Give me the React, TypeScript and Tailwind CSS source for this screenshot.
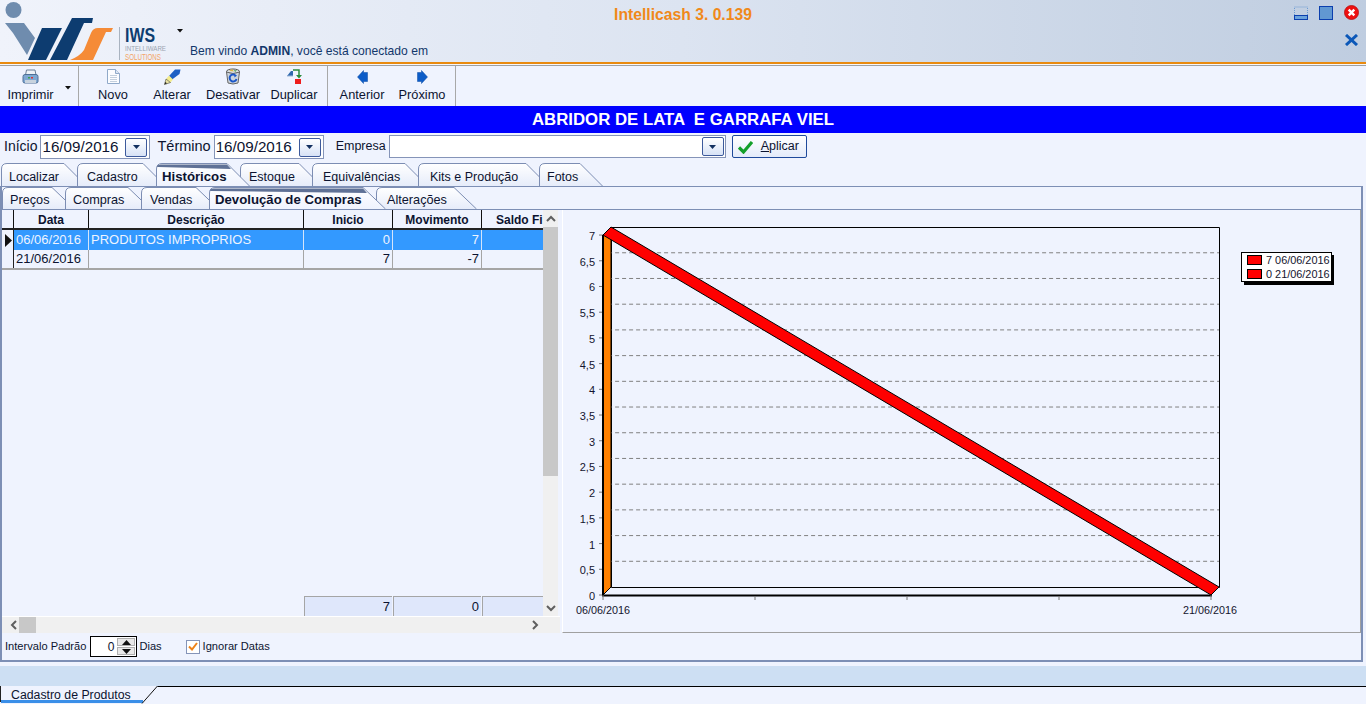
import React from "react";

const TEXT = "text-[#0c1330]";

function TabShape({ w, h, active }: { w: number; h: number; active?: boolean }) {
  const id = `g${w}${h}${active ? "a" : "n"}`;
  const d = `M0.5 ${h} L0.5 6 Q0.5 0.5 6 0.5 L${w - 23} 0.5 L${w - 0.5} ${h}`;
  return (
    <svg className="absolute left-0 top-0 pointer-events-none" width={w} height={h + 1}>
      <defs>
        <linearGradient id={id} x1="0" y1="0" x2="0" y2="1">
          <stop offset="0" stopColor="#ffffff" />
          <stop offset="1" stopColor={active ? "#eff3fe" : "#e6ecfa"} />
        </linearGradient>
      </defs>
      <path d={d} fill={`url(#${id})`} stroke="#7c8db3" />
      {active && <path d={`M1 4 Q1 1.5 5 1.5 L${w - 23} 1.5 L${w - 19} 6 L2 4 Z`} fill="#5f7196" />}
    </svg>
  );
}

function Tab({ slot, pad, w, h, active, children }: { slot: string; pad: string; w: number; h: number; active?: boolean; children: React.ReactNode }) {
  return (
    <div className={`relative shrink-0 ${slot} ${active ? "z-10" : ""}`}>
      <TabShape w={w} h={h} active={active} />
      <div className={`relative flex h-full items-end whitespace-nowrap leading-[17px] ${pad} ${active ? "pb-[1px] text-[13.2px] font-bold" : ""}`}>{children}</div>
    </div>
  );
}

function Logo() {
  return (
    <svg width="176" height="62" viewBox="0 0 176 62" className="shrink-0">
      <circle cx="13.5" cy="10" r="8" fill="#6f8cae" />
      <path d="M5 23 H24 L35 38 L27 55 L13 33 Z" fill="#6f8cae" />
      <path d="M28 60 L42 28 H62 L46 60 Z" fill="#0d3c70" />
      <path d="M50 60 L72 18 H93 L92 23 H84 L67 60 Z" fill="#0d3c70" />
      <path d="M70 60 Q80 56 84 50 L91 33 Q93 28 98 28 H113 L111 32 H106 L93 60 Z" fill="#f58b37" />
      <rect x="119" y="27" width="1" height="33" fill="#a9b3c0" />
      <text x="125" y="42" fontFamily="'Liberation Sans',sans-serif" fontWeight="700" fontSize="20" fill="#0d3c70" textLength="30" lengthAdjust="spacingAndGlyphs">IWS</text>
      <text x="125" y="51" fontFamily="'Liberation Sans',sans-serif" fontSize="7.5" fill="#9aa4b0" textLength="41" lengthAdjust="spacingAndGlyphs">INTELLIWARE</text>
      <text x="125" y="60" fontFamily="'Liberation Sans',sans-serif" fontSize="8.5" fill="#f3a468" textLength="36" lengthAdjust="spacingAndGlyphs">SOLUTIONS</text>
    </svg>
  );
}

function Caret({ className = "" }: { className?: string }) {
  return (
    <svg width="6" height="4" viewBox="0 0 6 4" className={className}>
      <path d="M0 0 H6 L3 3.5 Z" fill="#101010" />
    </svg>
  );
}

function PrinterIcon() {
  return (
    <svg width="17" height="16" viewBox="0 0 17 16">
      <path d="M4.5 1 H13 L14 6 H3.5 Z" fill="#eef2f8" stroke="#6b7f98" />
      <path d="M1 7.5 Q1 5.5 3 5.5 H14 Q16 5.5 16 7.5 V12.5 Q16 14 14 14 H3 Q1 14 1 12.5 Z" fill="#7ea7d2" stroke="#4e6f96" />
      <rect x="3" y="11" width="11" height="3" fill="#c8d3de" />
      <rect x="6" y="8" width="2" height="1.5" fill="#3ca24a" />
      <rect x="9" y="8" width="2" height="1.5" fill="#d33" />
    </svg>
  );
}
function DocIcon() {
  return (
    <svg width="13" height="15" viewBox="0 0 13 15">
      <path d="M0.5 0.5 H8.5 L12.5 4.5 V14.5 H0.5 Z" fill="#fbfcff" stroke="#90a9c9" />
      <path d="M8.5 0.5 V4.5 H12.5" fill="#dbe6f3" stroke="#90a9c9" />
      <path d="M3 6.5 H10 M3 8.5 H10 M3 10.5 H10 M3 12.5 H10" stroke="#c3cfdd" />
    </svg>
  );
}
function PencilIcon() {
  return (
    <svg width="17" height="16" viewBox="0 0 17 16">
      <path d="M11 0.5 L16.5 0.5 L15.5 5 L8 10.5 L5 7 Z" fill="#1d5fc4" />
      <path d="M2 10 L6.5 13.5 L9 10.5 L5 6.5 Z" fill="#f4ec8f" />
      <path d="M0.5 15.5 L2 10 L6.5 13.5 Z" fill="#e9e2a3" stroke="#4a4a3a" strokeWidth="0.6" />
      <path d="M0.5 15.5 L1.2 13 L3 14.3 Z" fill="#222" />
    </svg>
  );
}
function BinIcon() {
  return (
    <svg width="16" height="17" viewBox="0 0 16 17">
      <ellipse cx="8" cy="3.5" rx="6.5" ry="2.5" fill="#dfe4ea" stroke="#555" />
      <path d="M1.5 4 L3 15 Q8 17 13 15 L14.5 4 Q8 7 1.5 4 Z" fill="#ccd4de" stroke="#666" />
      <path d="M4 3 L7 1 L9 3.5 Z" fill="#d9b34a" />
      <path d="M9 2 L12 2.5 L10 4 Z" fill="#4f9c4d" />
      <path d="M10 7 A3.5 3.5 0 1 0 11.5 11" fill="none" stroke="#1b57c9" strokeWidth="2" />
      <path d="M9 5.8 L12 7.5 L9.5 9.5 Z" fill="#1b57c9" />
    </svg>
  );
}
function DuplicateIcon() {
  return (
    <svg width="15" height="15" viewBox="0 0 15 15">
      <path d="M0 7 L4 2 H6 V7 Z" fill="#2f68ad" />
      <path d="M6 1 H12 V7" fill="none" stroke="#2a8b3d" strokeWidth="1.5" />
      <path d="M9 6 H15 L12 9.5 Z" fill="#2a8b3d" />
      <path d="M0 7 H6" stroke="#9db7d8" />
      <rect x="8" y="10" width="6" height="5" fill="#ee1c1c" />
    </svg>
  );
}
function ArrowIcon({ right }: { right?: boolean }) {
  return (
    <svg width="11" height="14" viewBox="0 0 11 14">
      <path d={right ? "M0.5 2.5 H4.5 V0.5 L10.5 7 L4.5 13.5 V11.5 H0.5 Z" : "M10.5 2.5 H6.5 V0.5 L0.5 7 L6.5 13.5 V11.5 H10.5 Z"} fill="#0c5cc8" stroke="#0a4aa5" strokeWidth="0.5" />
    </svg>
  );
}

function ToolBtn({ w, icon, label }: { w: string; icon: React.ReactNode; label: string }) {
  return (
    <div className={`flex shrink-0 flex-col items-center ${w}`}>
      <div className="flex h-[19px] items-center justify-center pt-[2px]">{icon}</div>
      <div className="mt-[3px] text-[12.8px] leading-[14px]">{label}</div>
    </div>
  );
}

function DropBtn() {
  return (
    <div className="flex h-[19px] w-[22px] shrink-0 items-center justify-center rounded-[2px] border border-[#3d5a9c] bg-gradient-to-b from-white to-[#d7e2f6]">
      <svg width="7" height="4" viewBox="0 0 7 4"><path d="M0 0 H7 L3.5 4 Z" fill="#12305f" /></svg>
    </div>
  );
}

function DateBox({ v }: { v: string }) {
  return (
    <div className="flex h-[24px] w-[110px] shrink-0 items-center justify-between border border-[#8594b8] bg-white pl-[1px] pr-[2px] text-[15.2px]">
      <span className="pt-[1px]">{v}</span>
      <DropBtn />
    </div>
  );
}

function Chevron({ dir }: { dir: "up" | "down" | "left" | "right" }) {
  const paths = {
    up: "M1 6 L5 2 L9 6",
    down: "M1 2 L5 6 L9 2",
    left: "M6 1 L2 5 L6 9",
    right: "M2 1 L6 5 L2 9",
  };
  const vertical = dir === "up" || dir === "down";
  return (
    <svg width={vertical ? 10 : 8} height={vertical ? 8 : 10} viewBox={vertical ? "0 0 10 8" : "0 0 8 10"}>
      <path d={paths[dir]} fill="none" stroke="#5f5f5f" strokeWidth="2" />
    </svg>
  );
}

const COLS = "grid grid-cols-[12px_75px_215px_89px_89px_61px]";

function Grid() {
  const head = "flex items-center justify-center border-r border-[#111] pt-[1px] font-bold overflow-hidden whitespace-nowrap";
  const cell = "flex items-center border-r border-[#a5a5a5] px-[2px] overflow-hidden whitespace-nowrap";
  return (
    <div className="flex min-h-0 flex-1 flex-col text-[12px]">
      <div className={`${COLS} h-[20px] shrink-0 border-b-2 border-[#222] text-[12px]`}>
        <div className="border-r border-[#111]" />
        <div className={head}>Data</div>
        <div className={head}>Descrição</div>
        <div className={head}>Inicio</div>
        <div className={head}>Movimento</div>
        <div className="flex items-center overflow-hidden whitespace-nowrap pl-[14px] pt-[1px] font-bold">Saldo Final</div>
      </div>
      <div className={`${COLS} h-[20px] shrink-0 text-[13px] text-[#eef4ff]`}>
        <div className="flex items-center border-r border-[#222] bg-[#eff3fe] pl-[3px]">
          <svg width="7" height="13" viewBox="0 0 7 13"><path d="M0 0 L7 6.5 L0 13 Z" fill="#111" /></svg>
        </div>
        <div className={`${cell} border-[#d5e5fb] bg-[#3399ff]`}>06/06/2016</div>
        <div className={`${cell} border-[#d5e5fb] bg-[#3399ff]`}>PRODUTOS IMPROPRIOS</div>
        <div className={`${cell} justify-end border-[#d5e5fb] bg-[#3399ff]`}>0</div>
        <div className={`${cell} justify-end border-[#d5e5fb] bg-[#3399ff]`}>7</div>
        <div className="bg-[#3399ff]" />
      </div>
      <div className={`${COLS} h-[20px] shrink-0 border-b-2 border-[#a5a5a5] text-[13px]`}>
        <div className="border-r border-[#222]" />
        <div className={cell}>21/06/2016</div>
        <div className={cell} />
        <div className={`${cell} justify-end`}>7</div>
        <div className={`${cell} justify-end`}>-7</div>
        <div />
      </div>
      <div className="flex-1" />
      <div className={`${COLS} mb-[2px] h-[18px] shrink-0 text-[13px]`}>
        <div className="col-span-3" />
        <div className="mr-[1px] flex items-center justify-end border-l border-t border-[#a5a5a5] bg-[#dfe7fb] pr-[2px]">7</div>
        <div className="mr-[1px] flex items-center justify-end border-l border-t border-[#a5a5a5] bg-[#dfe7fb] pr-[2px]">0</div>
        <div className="border-l border-t border-[#a5a5a5] bg-[#dfe7fb]" />
      </div>
    </div>
  );
}

function Chart() {
  const labels = ["0", "0,5", "1", "1,5", "2", "2,5", "3", "3,5", "4", "4,5", "5", "5,5", "6", "6,5", "7"];
  const ticksX = [755, 907, 1059];
  const f = "'Liberation Sans',sans-serif";
  return (
    <svg viewBox="563 210 797 422" width="797" height="422" className="block">
      <path d="M611.5 587.5 V227.5 H1219.5 V587.5 H611.5" fill="none" stroke="#000" />
      {labels.map((l, i) => {
        const yFront = 595 - i * 25.71;
        const yBack = yFront - 8;
        return (
          <g key={l}>
            <path d={`M599 ${yFront} H603`} stroke="#777" />
            {i > 0 && i < 14 && <path d={`M604 ${yBack + 7} L611 ${yBack} H1219`} fill="none" stroke="#808080" strokeDasharray="4 3" />}
            <text x="595" y={yFront + 5} textAnchor="end" fontFamily={f} fontSize="11" fill="#14142e">{l}</text>
          </g>
        );
      })}
      <path d="M603 235 L611 227 V587 L603 595 Z" fill="#ff8000" stroke="#000" />
      <path d="M603 595 V235" stroke="#000" strokeWidth="2" />
      <path d="M602 595.5 H1212" stroke="#000" strokeWidth="2" />
      <path d="M603 595 V600 M1211 595 V600" stroke="#777" />
      {ticksX.map((x) => (
        <path key={x} d={`M${x} 596 V600`} stroke="#777" />
      ))}
      <path d="M603 235 L611 227 L1219 587 L1211 595 Z" fill="#ff0000" stroke="#000" />
      <text x="603" y="614" textAnchor="middle" fontFamily={f} fontSize="10.8" fill="#14142e">06/06/2016</text>
      <text x="1210" y="614" textAnchor="middle" fontFamily={f} fontSize="10.8" fill="#14142e">21/06/2016</text>
      <rect x="1244" y="255" width="90" height="30" fill="#000" />
      <rect x="1241.5" y="252.5" width="90" height="29" fill="#fff" stroke="#000" />
      <rect x="1247.5" y="255.5" width="14" height="9" fill="#ff0000" stroke="#000" />
      <rect x="1247.5" y="269.5" width="14" height="9" fill="#ff0000" stroke="#000" />
      <text x="1266" y="264" fontFamily={f} fontSize="10.9" fill="#14142e">7 06/06/2016</text>
      <text x="1266" y="278" fontFamily={f} fontSize="10.9" fill="#14142e">0 21/06/2016</text>
    </svg>
  );
}

export default function App() {
  return (
    <div className={`flex h-[704px] w-[1366px] flex-col overflow-hidden bg-[#eff3fe] font-['Liberation_Sans',sans-serif] ${TEXT}`}>
      {/* Header */}
      <div className="grid h-[62px] shrink-0 grid-cols-[430px_1fr_430px] bg-gradient-to-r from-[#f0f3fb] via-[#dce4f1] to-[#bfcde0]">
        <div className="flex items-start">
          <Logo />
          <Caret className="ml-[1px] mt-[29px]" />
          <div className="ml-[7px] mt-[44px] whitespace-nowrap text-[12.1px] leading-[15px] text-[#12376b]">
            Bem vindo <b>ADMIN</b>, você está conectado em
          </div>
        </div>
        <div className="pt-[6px] text-center text-[15.7px] font-bold leading-[17px] text-[#f0891a]">Intellicash 3. 0.139</div>
        <div className="flex flex-col items-end pr-[7px] pt-[5px]">
          <div className="flex items-center gap-[11px]">
            <svg width="14" height="14" viewBox="0 0 14 14">
              <rect x="0.5" y="1" width="13" height="9" fill="none" stroke="#6c9bd3" strokeDasharray="1 1" />
              <rect x="0.5" y="9.5" width="13" height="4" fill="#6ba3dc" stroke="#0b3fae" />
            </svg>
            <svg width="14" height="14" viewBox="0 0 14 14">
              <rect x="0.5" y="0.5" width="13" height="13" fill="#6198d2" stroke="#0b3fae" />
            </svg>
            <svg width="15" height="15" viewBox="0 0 16 16">
              <circle cx="8" cy="8" r="7.5" fill="#ee1111" stroke="#b50c0c" strokeWidth="0.8" />
              <path d="M5 5 L11 11 M11 5 L5 11" stroke="#fff" strokeWidth="2.6" />
            </svg>
          </div>
          <svg width="15" height="12" viewBox="0 0 15 12" className="mt-[14px]">
            <path d="M2 1 L13 11 M13 1 L2 11" stroke="#0c58b8" strokeWidth="3" />
          </svg>
        </div>
      </div>
      <div className="h-[2px] shrink-0 bg-[#e98a0f]" />
      <div className="h-[1px] shrink-0 bg-[#f4f6fc]" />
      <div className="h-[1px] shrink-0 bg-[#a0a0a0]" />

      {/* Toolbar */}
      <div className="flex h-[40px] shrink-0">
        <div className="relative flex w-[79px] shrink-0 border-r border-[#a8a8a8]">
          <ToolBtn w="w-[61px]" icon={<PrinterIcon />} label="Imprimir" />
          <Caret className="mt-[20px] ml-[4px]" />
        </div>
        <div className="flex w-[249px] shrink-0 border-r border-[#a8a8a8]">
          <ToolBtn w="w-[68px]" icon={<DocIcon />} label="Novo" />
          <ToolBtn w="w-[50px]" icon={<PencilIcon />} label="Alterar" />
          <ToolBtn w="w-[72px]" icon={<BinIcon />} label="Desativar" />
          <ToolBtn w="w-[50px]" icon={<DuplicateIcon />} label="Duplicar" />
        </div>
        <div className="flex w-[128px] shrink-0 border-r border-[#a8a8a8]">
          <ToolBtn w="w-[68px]" icon={<ArrowIcon />} label="Anterior" />
          <ToolBtn w="w-[52px]" icon={<ArrowIcon right />} label="Próximo" />
        </div>
      </div>

      {/* Title */}
      <div className="flex h-[27px] shrink-0 items-center justify-center whitespace-pre bg-[#0000ff] text-[16.8px] font-bold text-white">
        ABRIDOR DE LATA  E GARRAFA VIEL
      </div>

      {/* Filters */}
      <div className="flex h-[30px] shrink-0 items-start pl-[4px] pt-[2px]">
        <span className="mr-[3px] pt-[1px] text-[14px] leading-[20px]">Início</span>
        <DateBox v="16/09/2016" />
        <span className="ml-[7px] mr-[3px] pt-[1px] text-[14.5px] leading-[20px]">Término</span>
        <DateBox v="16/09/2016" />
        <span className="ml-[12px] mr-[3px] pt-[1px] text-[12.5px] leading-[20px]">Empresa</span>
        <div className="flex h-[23px] w-[337px] shrink-0 items-center justify-end border border-[#8594b8] bg-white pr-[1px]">
          <DropBtn />
        </div>
        <div className="ml-[6px] flex h-[23px] w-[75px] shrink-0 items-center rounded-[2px] border border-[#1f4a9b] bg-gradient-to-b from-white to-[#e4ebfa] pl-[5px] text-[12.5px]">
          <svg width="15" height="14" viewBox="0 0 15 14">
            <path d="M1 7.5 L5.5 12 L14 2" fill="none" stroke="#14a02a" strokeWidth="3.2" />
          </svg>
          <span className="ml-[8px]"><u>A</u>plicar</span>
        </div>
      </div>

      {/* Outer tabs */}
      <div className="flex h-[23px] shrink-0 pl-[1px] text-[12.5px]">
        <Tab slot="w-[76px]" pad="pl-[8px]" w={86} h={23}>Localizar</Tab>
        <Tab slot="w-[79px]" pad="pl-[10px]" w={89} h={23}>Cadastro</Tab>
        <Tab slot="w-[84px]" pad="pl-[6px]" w={94} h={23} active>Históricos</Tab>
        <Tab slot="w-[72px]" pad="pl-[9px]" w={82} h={23}>Estoque</Tab>
        <Tab slot="w-[106px]" pad="pl-[11px]" w={116} h={23}>Equivalências</Tab>
        <Tab slot="w-[121px]" pad="pl-[12px]" w={131} h={23}>Kits e Produção</Tab>
        <Tab slot="w-[64px]" pad="pl-[8px]" w={64} h={23}>Fotos</Tab>
      </div>

      {/* Outer panel */}
      <div className="mr-[3px] flex h-[476px] shrink-0 flex-col border-x-2 border-b-2 border-t border-[#7d8fb5]">
        <div className="flex h-[22px] shrink-0 text-[12.7px]">
          <Tab slot="w-[63px]" pad="pl-[8px]" w={73} h={22}>Preços</Tab>
          <Tab slot="w-[76px]" pad="pl-[8px]" w={86} h={22}>Compras</Tab>
          <Tab slot="w-[68px]" pad="pl-[9px]" w={78} h={22}>Vendas</Tab>
          <Tab slot="w-[167px]" pad="pl-[6px]" w={177} h={22} active>Devolução de Compras</Tab>
          <Tab slot="w-[101px]" pad="pl-[11px]" w={101} h={22}>Alterações</Tab>
        </div>
        <div className="flex h-[424px] shrink-0 border-t border-[#7d8fb5]">
          {/* Left pane */}
          <div className="flex w-[558px] shrink-0 flex-col">
            <div className="flex min-h-0 flex-1">
              <div className="flex w-[541px] shrink-0 flex-col">
                <Grid />
              </div>
              <div className="flex w-[15px] shrink-0 flex-col bg-[#f0f0f0]">
                <div className="flex h-[17px] shrink-0 items-center justify-center"><Chevron dir="up" /></div>
                <div className="h-[249px] shrink-0 bg-[#c8c8c8]" />
                <div className="flex-1" />
                <div className="flex h-[17px] shrink-0 items-center justify-center"><Chevron dir="down" /></div>
              </div>
            </div>
            <div className="flex h-[17px] shrink-0 items-center border-t border-white bg-[#f0f0f0] pl-[8px]">
              <Chevron dir="left" />
              <div className="ml-[1px] h-[16px] w-[17px] bg-[#c8c8c8]" />
              <div className="flex-1" />
              <div className="mr-[21px]"><Chevron dir="right" /></div>
            </div>
          </div>
          {/* Chart */}
          <div className="ml-[2px] flex-1 border-b border-r border-l border-b-[#a0a0a0] border-r-[#a0a0a0] border-l-white">
            <Chart />
          </div>
        </div>
        <div className="flex flex-1 items-center pl-[3px] text-[11.1px]">
          <span>Intervalo Padrão</span>
          <div className="ml-[4px] flex h-[21px] w-[47px] items-center justify-between border border-black bg-white pl-[1px] text-[12px]">
            <span className="flex-1 pr-[3px] text-right">0</span>
            <div className="flex h-full w-[19px] flex-col gap-[1px] py-[1px] pr-[1px]">
              <div className="flex flex-1 items-center justify-center border border-[#b0b0b0] bg-[#e8e8e8]">
                <svg width="9" height="5" viewBox="0 0 9 5"><path d="M0 5 L4.5 0 L9 5 Z" fill="#111" /></svg>
              </div>
              <div className="flex flex-1 items-center justify-center border border-[#b0b0b0] bg-[#e8e8e8]">
                <svg width="9" height="5" viewBox="0 0 9 5"><path d="M0 0 L4.5 5 L9 0 Z" fill="#111" /></svg>
              </div>
            </div>
          </div>
          <span className="ml-[2px]">Dias</span>
          <div className="ml-[24px] flex h-[14px] w-[14px] items-center justify-center border border-[#8594b8] bg-white">
            <svg width="10" height="9" viewBox="0 0 10 9"><path d="M1 4.5 L4 7.5 L9 1" fill="none" stroke="#ee8218" strokeWidth="2" /></svg>
          </div>
          <span className="ml-[3px]">Ignorar Datas</span>
        </div>
      </div>

      <div className="mt-[4px] h-[20px] shrink-0 bg-[#cddff3]" />

      {/* Bottom bar */}
      <div className="relative h-[18px] shrink-0 border-t border-black">
        <svg width="158" height="18" className="absolute -top-[1px] left-0">
          <path d="M0 0 H158 L142 17.5 H2 Z" fill="#eff3fe" />
          <path d="M0.5 0 V16" stroke="#222" />
          <path d="M1 15.5 H143" stroke="#3a8fe8" strokeWidth="3" />
          <path d="M142 17.5 L157.5 0" stroke="#111" />
        </svg>
        <div className="relative pl-[11px] text-[12.3px] leading-[16px]">Cadastro de Produtos</div>
      </div>
    </div>
  );
}
